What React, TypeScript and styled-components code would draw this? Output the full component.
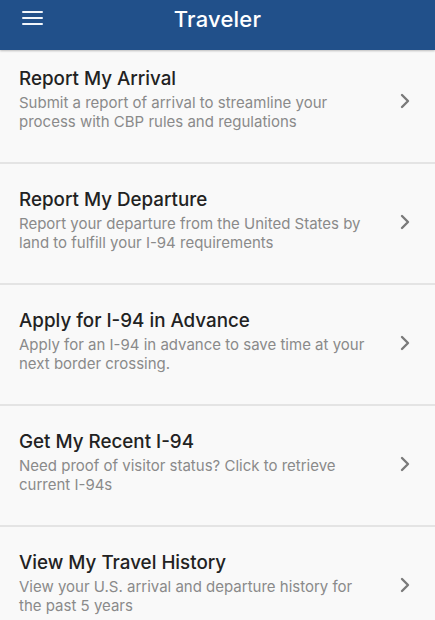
import styled, { createGlobalStyle } from "styled-components";

const GlobalStyle = createGlobalStyle`
  html, body {
    margin: 0;
    padding: 0;
    background: #f8f8f8;
  }
  body {
    font-family: Inter, "Open Sans", sans-serif;
  }
`;

const Page = styled.div`
  width: 435px;
  height: 620px;
  overflow: hidden;
  display: flex;
  flex-direction: column;
  background: #f8f8f8;
`;

const Header = styled.header`
  position: relative;
  z-index: 1;
  flex: 0 0 50px;
  display: flex;
  align-items: center;
  justify-content: center;
  background: #21508a;
  box-shadow: 0 1px 2px rgba(0, 0, 0, 0.25);
`;

const MenuButton = styled.button`
  position: absolute;
  left: 22px;
  top: 10.5px;
  width: 21px;
  height: 14.5px;
  padding: 0;
  border: 0;
  background: none;
  display: flex;
  flex-direction: column;
  justify-content: space-between;
`;

const MenuLine = styled.span`
  display: block;
  height: 2.5px;
  border-radius: 1px;
  background: #f2f6fb;
`;

const Title = styled.h1`
  margin: 0 0 12px;
  color: #ffffff;
  font-size: 22px;
  font-weight: 500;
  letter-spacing: 0.2px;
`;

const List = styled.ul`
  list-style: none;
  margin: 0;
  padding: 0;
`;

const Row = styled.li<{ $first?: boolean }>`
  display: flex;
  align-items: center;
  padding: ${(p) => (p.$first ? "17px" : "24px")} 25px 31px 19px;
  border-bottom: 2px solid #e4e4e4;
  background: #f9f9f9;
`;

const Text = styled.div`
  flex: 1;
  display: flex;
  flex-direction: column;
  gap: 2px;
`;

const ItemTitle = styled.div`
  color: #222;
  font-size: 18.8px;
  line-height: 24px;
  font-weight: 500;
`;

const ItemDesc = styled.div`
  color: #8a8a8a;
  font-size: 15px;
  line-height: 19px;
  max-width: 354px;
`;

const Chevron = styled.svg`
  flex: 0 0 auto;
  margin-left: 6px;
  margin-top: 4px;
`;

const items = [
  {
    title: "Report My Arrival",
    desc: "Submit a report of arrival to streamline your process with CBP rules and regulations",
  },
  {
    title: "Report My Departure",
    desc: "Report your departure from the United States by land to fulfill your I-94 requirements",
  },
  {
    title: "Apply for I-94 in Advance",
    desc: "Apply for an I-94 in advance to save time at your next border crossing.",
  },
  {
    title: "Get My Recent I-94",
    desc: "Need proof of visitor status? Click to retrieve current I-94s",
  },
  {
    title: "View My Travel History",
    desc: "View your U.S. arrival and departure history for the past 5 years",
  },
];

const App = () => (
  <>
    <GlobalStyle />
    <Page>
      <Header>
        <MenuButton aria-label="Menu">
          <MenuLine />
          <MenuLine />
          <MenuLine />
        </MenuButton>
        <Title>Traveler</Title>
      </Header>
      <List>
        {items.map((item, i) => (
          <Row key={item.title} $first={i === 0}>
            <Text>
              <ItemTitle>{item.title}</ItemTitle>
              <ItemDesc>{item.desc}</ItemDesc>
            </Text>
            <Chevron width="10" height="16" viewBox="0 0 10 16">
              <path
                d="M2 2l6 6-6 6"
                fill="none"
                stroke="#7a7a7a"
                strokeWidth="2.4"
                strokeLinecap="round"
                strokeLinejoin="round"
              />
            </Chevron>
          </Row>
        ))}
      </List>
    </Page>
  </>
);

export default App;
